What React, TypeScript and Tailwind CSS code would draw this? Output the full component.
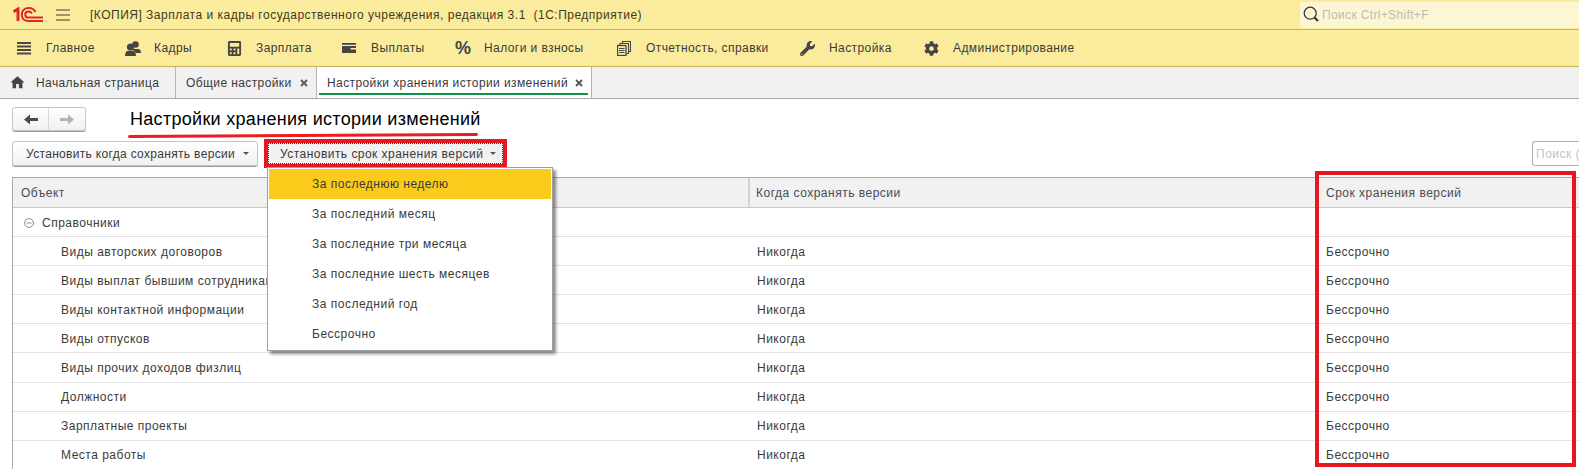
import { FaCalculator, FaCog, FaWrench } from "react-icons/fa";
import { MdHome } from "react-icons/md";

const font = { fontFamily: '"Liberation Sans", Arial, sans-serif' };

function Logo() {
  return (
    <svg width="30" height="15" viewBox="0 0 30 15" fill="none" stroke="#e0262b">
      <path d="M0.5 4.6 L5 2 V14" strokeWidth="3" />
      <path d="M22.5 5 C21 2 18.5 1 15.8 1 C11.3 1 8.8 4 8.8 7.7 C8.8 11.3 11.3 14 15.5 14 H30" strokeWidth="2" />
      <path d="M19 6.5 C18 5 17 4.5 15.8 4.5 C13.5 4.5 12.2 6 12.2 7.7 C12.2 9.4 13.5 10.6 15.5 10.6 H30" strokeWidth="2" />
    </svg>
  );
}

function Burger() {
  return (
    <svg width="14" height="12" viewBox="0 0 14 12" stroke="#3a3a3a" strokeWidth="1.2">
      <path d="M0 1 H14 M0 6 H14 M0 11 H14" />
    </svg>
  );
}

function MainIcon() {
  return (
    <svg width="14" height="15" viewBox="0 0 14 15" stroke="#4a4a4a" strokeWidth="2">
      <path d="M0 2 H14 M0 5.5 H14 M0 9 H14 M0 12.5 H14" />
    </svg>
  );
}

function PeopleIcon() {
  return (
    <svg width="16" height="15" viewBox="0 0 16 15" fill="#454545">
      <circle cx="10.5" cy="3.5" r="3.3" />
      <path d="M8 8 H13 C15 8 16 9.5 16 12 H11 L8 9 Z" />
      <circle cx="5.5" cy="6" r="3.6" />
      <path d="M0 15 C0 11.5 1.5 9.8 3.5 9.8 H7.5 C9.5 9.8 11 11.5 11 15 Z" />
    </svg>
  );
}

function PayIcon() {
  return (
    <svg width="14" height="10" viewBox="0 0 14 10" fill="#454545">
      <path d="M0 0 H14 V1.8 H0 Z" />
      <path d="M0 3 H14 V5 H8.5 V6.5 H14 V10 H0 Z" />
    </svg>
  );
}

function DocsIcon() {
  return (
    <svg width="14" height="15" viewBox="0 0 14 15" fill="none" stroke="#454545" strokeWidth="1.1">
      <path d="M5.5 2.5 V0.5 H13.5 V10.5 H11.5" />
      <path d="M3 4.5 V2.5 H11.5 V12.5 H9.5" />
      <rect x="0.5" y="4.5" width="8.5" height="10" strokeWidth="1.3" />
      <path d="M2 7.5 H7.5 M2 9.5 H7.5 M2 11.5 H7.5" />
    </svg>
  );
}

function SearchIcon() {
  return (
    <svg width="16" height="17" viewBox="0 0 16 17" fill="none" stroke="#333">
      <circle cx="7.2" cy="7.2" r="6" strokeWidth="1.2" />
      <path d="M11.5 11.5 L15 15" strokeWidth="2.2" />
    </svg>
  );
}

function ArrowIcon({ left, color }: { left?: boolean; color: string }) {
  return (
    <svg width="14" height="11" viewBox="0 0 14 11" fill={color}>
      {left ? <path d="M0 5.5 L6 0.5 V4 H14 V7 H6 V10.5 Z" /> : <path d="M14 5.5 L8 0.5 V4 H0 V7 H8 V10.5 Z" />}
    </svg>
  );
}

function Caret() {
  return <span className="inline-block border-x-[3px] border-t-[3px] border-x-transparent border-t-[#555]" />;
}

function CloseIcon() {
  return (
    <svg width="8" height="8" viewBox="0 0 8 8" stroke="#555" strokeWidth="1.8">
      <path d="M1 1 L7 7 M7 1 L1 7" />
    </svg>
  );
}

function Collapse() {
  return (
    <svg width="10" height="10" viewBox="0 0 10 10" fill="none" stroke="#8a8a8a">
      <circle cx="5" cy="5" r="4.4" />
      <path d="M2.5 5 H7.5" />
    </svg>
  );
}

const nav = [
  { label: "Главное", icon: <MainIcon />, w: "w-[108px]" },
  { label: "Кадры", icon: <PeopleIcon />, w: "w-[102px]" },
  { label: "Зарплата", icon: <FaCalculator size={15} color="#454545" />, w: "w-[115px]" },
  { label: "Выплаты", icon: <PayIcon />, w: "w-[113px]" },
  { label: "Налоги и взносы", icon: <span className="text-[18px] font-bold tracking-normal text-[#454545]">%</span>, w: "w-[162px]" },
  { label: "Отчетность, справки", icon: <DocsIcon />, w: "w-[183px]" },
  { label: "Настройка", icon: <FaWrench size={15} color="#454545" />, w: "w-[124px]" },
  { label: "Администрирование", icon: <FaCog size={15} color="#454545" />, w: "w-[180px]" },
];

const rows = [
  "Виды авторских договоров",
  "Виды выплат бывшим сотрудникам",
  "Виды контактной информации",
  "Виды отпусков",
  "Виды прочих доходов физлиц",
  "Должности",
  "Зарплатные проекты",
  "Места работы",
];

const menu = [
  "За последнюю неделю",
  "За последний месяц",
  "За последние три месяца",
  "За последние шесть месяцев",
  "За последний год",
  "Бессрочно",
];

const cols = "grid grid-cols-[737px_566px_1fr]";

export default function App() {
  return (
    <div style={font} className="relative flex h-[469px] w-[1579px] flex-col overflow-hidden bg-white text-[12px] tracking-[0.5px] text-[#3a3a3a]">
      <header className="flex h-[30px] shrink-0 items-center border-b border-[#c9b764] bg-[#fbec9d]">
        <div className="ml-[13px] flex w-[43px] items-center"><Logo /></div>
        <div className="flex w-[34px] items-center"><Burger /></div>
        <span className="text-[#3f3a20]">[КОПИЯ] Зарплата и кадры государственного учреждения, редакция 3.1&nbsp; (1С:Предприятие)</span>
        <div className="ml-auto flex h-[26px] w-[279px] items-center gap-[3px] rounded-l-[3px] bg-[#fdf6d4] pl-[3px] tracking-[0.35px] text-[#bdbab0]">
          <SearchIcon />
          <span>Поиск Ctrl+Shift+F</span>
        </div>
      </header>

      <nav className="flex h-[37px] shrink-0 items-center border-b border-[#c4b35a] bg-[#fbec9d] pl-[17px] tracking-[0.42px]">
        {nav.map((n) => (
          <div key={n.label} className={`flex shrink-0 items-center ${n.w}`}>
            <span className="flex w-[29px] shrink-0 items-center">{n.icon}</span>
            <span>{n.label}</span>
          </div>
        ))}
      </nav>

      <div className="flex h-[32px] shrink-0 border-b border-[#a9a9a9] bg-[#f1f1f1] tracking-[0.4px]">
        <div className="flex w-[176px] items-center border-r border-[#b5b5b5] pl-[9px]">
          <MdHome size={17} color="#444" />
          <span className="ml-[10px]">Начальная страница</span>
        </div>
        <div className="flex w-[141px] items-center border-r border-[#b5b5b5] pl-[10px]">
          <span>Общие настройки</span>
          <span className="ml-auto mr-[8px] flex"><CloseIcon /></span>
        </div>
        <div className="relative flex w-[275px] items-center border-r border-[#b5b5b5] bg-white pl-[10px]">
          <span>Настройки хранения истории изменений</span>
          <span className="ml-auto mr-[8px] flex"><CloseIcon /></span>
          <span className="absolute bottom-[3px] left-[2px] right-[3px] h-[2px] bg-[#0c9447]" />
        </div>
      </div>

      <main className="flex min-h-0 flex-1 flex-col">
        <div className="mt-[8px] flex h-[24px] items-center pl-[12px]">
          <div className="flex h-[24px] w-[74px] rounded-[3px] border border-[#c4c4c4] bg-gradient-to-b from-white to-[#f1f1f1] shadow-[0_1px_0_#999]">
            <span className="flex w-[36px] items-center justify-center border-r border-[#d8d8d8]"><ArrowIcon left color="#4b4b4b" /></span>
            <span className="flex flex-1 items-center justify-center"><ArrowIcon color="#b4b4b4" /></span>
          </div>
          <h1 className="relative ml-[44px] text-[18px] font-normal tracking-[0.3px] text-black">
            Настройки хранения истории изменений
            <span className="absolute -bottom-[4px] -left-[2px] h-[3px] w-[350px] -rotate-[0.3deg] rounded-full bg-[#ea1c24]" />
          </h1>
        </div>

        <div className="mt-[10px] flex h-[25px] items-center pl-[12px]">
          <div className="flex h-[25px] w-[246px] items-center rounded-[3px] border border-[#c4c4c4] bg-gradient-to-b from-white to-[#f1f1f1] pl-[13px] tracking-[0.32px] shadow-[0_1px_0_#999]">
            <span>Установить когда сохранять версии</span>
            <span className="ml-[8px] flex"><Caret /></span>
          </div>
          <div className="relative ml-[6px] flex h-[29px] w-[243px] items-center border-[4px] border-[#e8161e] bg-[#f1f1f1] tracking-[0.46px]">
            <div className="flex h-full w-full items-center border border-dotted border-[#333] pl-[11px]">
              <span>Установить срок хранения версий</span>
              <span className="ml-[7px] flex"><Caret /></span>
            </div>
          </div>
          <div className="ml-auto flex h-[25px] w-[47px] items-center overflow-hidden whitespace-nowrap rounded-l-[3px] border border-r-0 border-[#b0b0b0] pl-[3px] text-[#c4c0cc]">
            Поиск (
          </div>
        </div>

        <section className="relative ml-[12px] mt-[11px] min-h-0 flex-1 border-l border-[#a9a9a9]">
          <div className={`${cols} h-[31px] items-center border-y border-y-[#a9a9a9] border-b-[#c8c8c8] bg-[#f1f1f1] text-[#4a4a55]`}>
            <span className="flex h-full items-center border-r-2 border-[#d4d4d4] pl-[8px]">Объект</span>
            <span className="pl-[6px]">Когда сохранять версии</span>
            <span className="pl-[10px]">Срок хранения версий</span>
          </div>
          <div className="flex h-[29.1px] items-center gap-[8px] border-b border-[#e2e2e2] pl-[11px] pt-[1px]">
            <Collapse />
            <span>Справочники</span>
          </div>
          {rows.map((r) => (
            <div key={r} className={`${cols} h-[29.1px] items-center border-b border-[#e2e2e2] pt-[1px]`}>
              <span className="pl-[48px]">{r}</span>
              <span className="pl-[7px]">Никогда</span>
              <span className="pl-[10px]">Бессрочно</span>
            </div>
          ))}

          <div className="absolute -top-[6px] bottom-[2px] left-[1302px] right-[3px] border-[4px] border-[#e8161e]" />

          <div className="absolute -top-[10px] left-[254px] w-[286px] border border-[#a0a0a0] bg-white p-[1px] shadow-[3px_3px_3px_rgba(0,0,0,0.45)]">
            {menu.map((m, i) => (
              <div key={m} className={i === 0 ? "flex h-[30px] items-center bg-[#fbcb1c] pl-[43px]" : "flex h-[30px] items-center pl-[43px]"}>
                {m}
              </div>
            ))}
          </div>
        </section>
      </main>
    </div>
  );
}
